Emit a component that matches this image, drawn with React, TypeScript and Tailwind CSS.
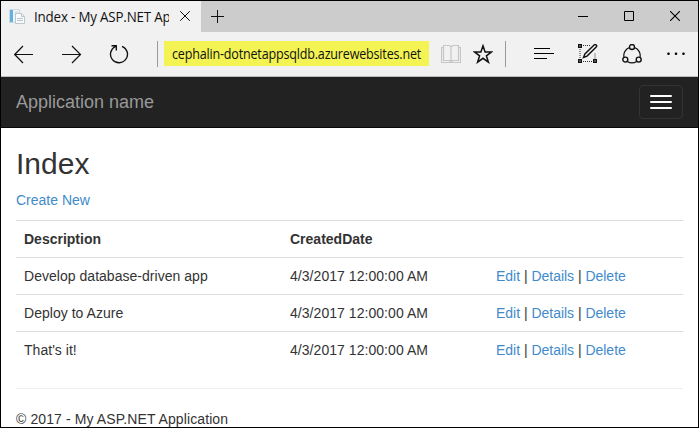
import type { ReactNode } from "react";

const rows = ["Develop database-driven app", "Deploy to Azure", "That's it!"];

function Icon({ w, h, className = "", children }: { w: number; h: number; className?: string; children: ReactNode }) {
  return (
    <svg width={w} height={h} viewBox={`0 0 ${w} ${h}`} fill="none" stroke="#111" strokeWidth="1.2" className={`block shrink-0 ${className}`}>
      {children}
    </svg>
  );
}

function TabStrip() {
  return (
    <div className="flex h-[31px] shrink-0 bg-[#cccccc]">
      <div className="flex w-[200px] shrink-0 items-start bg-[#f1f1f1]">
        <Icon w={16} h={16} className="ml-[8px] mt-[8px]">
          <path d="M.5 .5h10v13H.5z" fill="#eef4f7" stroke="#ccdbe3" strokeWidth="1" />
          <path d="M1 1h3v12H1z" fill="#62b0dd" stroke="none" />
          <path d="M5.500 3h4M5.500 5h4" stroke="#d0d8dc" strokeWidth="1" />
          <path d="M6.500 4.500h6l3 3v7h-9z" fill="#fafafa" stroke="#bcc8cf" strokeWidth="1" />
          <path d="M12.500 4.500v3h3M8 9.500h6M8 11.500h6" stroke="#bac5cd" strokeWidth="1" />
        </Icon>
        <div className="ml-[9px] mt-[5px] w-[135px] overflow-hidden whitespace-nowrap text-[#111]">
          <span className="block w-[146px] origin-left scale-x-[0.922] font-['Open_Sans','Noto_Sans',sans-serif] text-[14.5px] leading-[21px] tracking-[-0.2px]">
            Index - My ASP.NET App
          </span>
        </div>
        <Icon w={10} h={10} className="ml-[11px] mt-[10px]">
          <path d="M.2 .2l9.600 9.600M9.800 .2l-9.600 9.600" strokeWidth="1" />
        </Icon>
      </div>
      <Icon w={13} h={13} className="ml-[10px] mt-[9px]">
        <path d="M0 6.500h13M6.500 0v13" strokeWidth="1" />
      </Icon>
      <div className="ml-auto mr-[18px] mt-[10px] flex gap-[36px]">
        <Icon w={10} h={10}><path d="M0 5.500h10" stroke="#000" strokeWidth="1" /></Icon>
        <Icon w={10} h={10}><path d="M.5 .5h9v9h-9z" stroke="#000" strokeWidth="1" /></Icon>
        <Icon w={10} h={10}><path d="M0 0l10 10M10 0L0 10" stroke="#000" strokeWidth="1.100" /></Icon>
      </div>
    </div>
  );
}

function Toolbar() {
  return (
    <div className="flex h-[45px] shrink-0 items-start border-b border-[#bdbdbd] bg-[#f1f1f1]">
      <Icon w={20} h={20} className="ml-[13px] mt-[12px]">
        <path d="M.8 10.500h18.200M9 2L.7 10.500 9 19" />
      </Icon>
      <Icon w={20} h={20} className="ml-[28px] mt-[12px]">
        <path d="M0 10.500h18.300M10 2l8.500 8.500L10 19" />
      </Icon>
      <Icon w={20} h={20} className="ml-[27px] mt-[12px]">
        <path d="M13 2.300a8.500 8.500 0 1 1-6.500.2M2.500 1.700h4.800v4.800" strokeWidth="1.350" />
      </Icon>
      <div className="ml-[28px] mt-[9px] h-[26px] w-px shrink-0 bg-[#999]" />
      <div className="ml-[6px] mt-[9px] flex h-[25px] w-[265px] shrink-0 items-center whitespace-nowrap bg-[#f3f354] pl-[8px] text-[#111]">
        <span className="block w-[249px] origin-left scale-x-[0.896] font-['Open_Sans','Noto_Sans',sans-serif] text-[14px] tracking-[-0.2px]">
          cephalin-dotnetappsqldb.azurewebsites.net
        </span>
      </div>
      <Icon w={20} h={20} className="ml-[12px] mt-[12px]">
        <path d="M2.500 1.500h6l1.500 1.500 1.500-1.500h6v15h-6l-1.500 1.500-1.500-1.500h-6zM10 3v15M2.500 3.500h-2v15h19v-15h-2" stroke="#c6c6c6" strokeWidth="1.200" />
      </Icon>
      <Icon w={20} h={20} className="ml-[12px] mt-[12px]">
        <path d="M10 1.800l2.100 6.100h6.500l-5.200 3.900 2 6.400-5.400-3.900-5.400 3.900 2-6.400-5.200-3.900h6.500z" strokeWidth="1.500" />
      </Icon>
      <div className="ml-[12px] mt-[9px] h-[26px] w-px shrink-0 bg-[#999]" />
      <Icon w={20} h={20} className="ml-[28px] mt-[12px]">
        <path d="M0 4.500h16M0 9.500h20M0 14.500h13" stroke="#000" strokeWidth="1.200" />
      </Icon>
      <Icon w={20} h={20} className="ml-[24px] mt-[12px]">
        <path d="M5 1.500h7M2 5v9M5 17.500h9M17 9.500v5" stroke="#333" strokeWidth="1" strokeDasharray="1 1" />
        <path d="M.7 .7h2.600v2.600H.7zM.7 15.700h2.600v2.600H.7zM15.700 15.700h2.600v2.600h-2.600z" strokeWidth="1.400" />
        <path d="M5.500 13.500l1.400-3.600 9.200-8.900a1.450 1.450 0 0 1 2.100 2.100l-9.200 9z" strokeWidth="1.400" />
      </Icon>
      <Icon w={20} h={20} className="ml-[24px] mt-[12px]">
        <circle cx="10" cy="3" r="2.500" strokeWidth="1.400" />
        <circle cx="3.300" cy="15.600" r="2.500" strokeWidth="1.400" />
        <circle cx="16.700" cy="15.600" r="2.500" strokeWidth="1.400" />
        <path d="M7.500 3.500A8.500 8.500 0 0 0 2 13.300M12.500 3.500a8.500 8.500 0 0 1 5.500 9.800M5.300 17.500a9 9 0 0 0 9.400 0" />
      </Icon>
      <Icon w={20} h={20} className="ml-[25px] mt-[12px]">
        <g fill="#000" stroke="none">
          <circle cx="1.500" cy="9.800" r="1.300" />
          <circle cx="9" cy="9.800" r="1.300" />
          <circle cx="16.500" cy="9.800" r="1.300" />
        </g>
      </Icon>
    </div>
  );
}

function Navbar() {
  return (
    <nav className="flex h-[51px] shrink-0 items-start justify-between border-b border-[#080808] bg-[#222222] px-[15px]">
      <a className="pt-[15px] text-lg leading-[20px] text-[#999999]">Application name</a>
      <button className="mt-[8px] flex h-[34px] w-[44px] flex-col gap-[4px] rounded-[4px] border border-[#333333] px-[10px] pt-[9px]">
        <span className="h-[2px] w-[22px] rounded-[1px] bg-white" />
        <span className="h-[2px] w-[22px] rounded-[1px] bg-white" />
        <span className="h-[2px] w-[22px] rounded-[1px] bg-white" />
      </button>
    </nav>
  );
}

export default function App() {
  return (
    <div className="flex h-[428px] w-[699px] flex-col overflow-hidden border border-black bg-white font-['Liberation_Sans',Arial,sans-serif] text-sm leading-[20px] text-[#333333]">
      <TabStrip />
      <Toolbar />
      <Navbar />
      <main className="px-[15px] pt-[19px]">
        <h2 className="text-[30px] font-normal leading-[33px]">Index</h2>
        <p className="mt-[10px] text-[#428bca]">Create New</p>
        <table className="mt-[10px] w-full table-fixed border-collapse text-left">
          <colgroup>
            <col className="w-[266px]" />
            <col className="w-[206px]" />
            <col />
          </colgroup>
          <thead>
            <tr className="h-[37px] border-t border-[#dddddd]">
              <th className="px-[8px]">Description</th>
              <th className="px-[8px]">CreatedDate</th>
              <th />
            </tr>
          </thead>
          <tbody>
            {rows.map((description) => (
              <tr key={description} className="h-[37px] border-t border-[#dddddd]">
                <td className="px-[8px] tracking-[0.03px]">{description}</td>
                <td className="px-[8px] tracking-[0.05px]">4/3/2017 12:00:00 AM</td>
                <td className="px-[8px] tracking-[-0.02px]">
                  <a className="text-[#428bca]">Edit</a> | <a className="text-[#428bca]">Details</a> | <a className="text-[#428bca]">Delete</a>
                </td>
              </tr>
            ))}
          </tbody>
        </table>
        <hr className="mb-[20px] mt-[19px] border-[#eeeeee]" />
        <footer className="tracking-[0.1px]">© 2017 - My ASP.NET Application</footer>
      </main>
    </div>
  );
}
